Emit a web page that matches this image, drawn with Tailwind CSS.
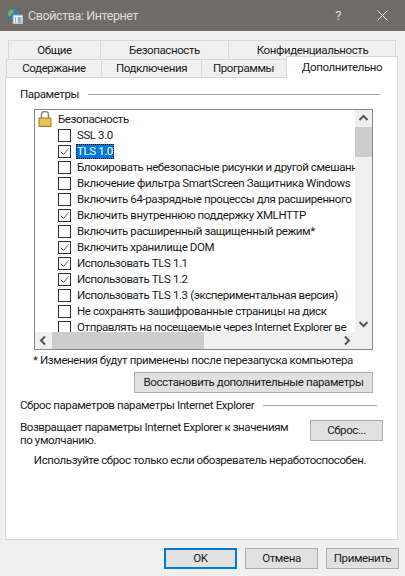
<!DOCTYPE html>
<html lang="ru">
<head>
<meta charset="UTF-8">
<title>Свойства: Интернет</title>
<script src="https://cdn.jsdelivr.net/npm/@tailwindcss/browser@4"></script>
</head>
<body class="w-[405px] h-[576px] overflow-hidden bg-[#f0f0f0] font-['Roboto','Noto_Sans',sans-serif] text-[11.5px] tracking-[-0.4px] leading-[16px] text-[#1a1a1a]">
  <!-- заголовок -->
  <div class="flex items-center h-[31px] bg-[#716b68] text-[#dedcdb]">
    <svg class="ml-[7px] w-[16px] h-[16px]" viewBox="0 0 16 16">
      <circle cx="6.5" cy="6.5" r="6" fill="#2f7fb8"/>
      <path d="M3 2c2-1 4 0 4 2s-3 1-3 3-3 1-3-1 1-3 2-4zM8 8c2-1 4 0 3 2l-3 2z" fill="#6fb35a"/>
      <rect x="6" y="7" width="10" height="9" fill="#f4f4f4" stroke="#9a9a9a"/>
      <path d="M8 10h1M8 12h1M8 14h1M10.500 10h4M10.500 12h4M10.500 14h4" stroke="#3b6ea5"/>
    </svg>
    <span class="ml-[5px] text-[12.5px] mt-[1px]">Свойства: Интернет</span>
    <span class="ml-auto mr-[36px] text-[13px]">?</span>
    <svg class="mr-[17px] w-[11px] h-[11px]" viewBox="0 0 11 11"><path d="M.5.5l10 10M10.500.5l-10 10" stroke="#e8e6e5" fill="none"/></svg>
  </div>

  <!-- вкладки -->
  <div class="relative h-[46px]">
    <div class="absolute left-[8px] top-[9px] w-[388px] h-[19px] flex border border-[#d9d9d9] border-b-0 text-center leading-[19px]">
      <div class="w-[92px] border-r border-[#d9d9d9]">Общие</div>
      <div class="w-[128px] border-r border-[#d9d9d9]">Безопасность</div>
      <div class="flex-1 pl-[1px]">Конфиденциальность</div>
    </div>
    <div class="absolute left-[6px] top-[28px] w-[282px] h-[18px] flex border border-[#d9d9d9] border-b-0 text-center">
      <div class="w-[95px] border-r border-[#d9d9d9]">Содержание</div>
      <div class="w-[100px] border-r border-[#d9d9d9]">Подключения</div>
      <div class="flex-1 pr-[2px]">Программы</div>
    </div>
    <div class="absolute left-[286px] top-[25px] w-[112px] h-[22px] bg-white border border-[#d9d9d9] border-b-0 text-center leading-[20px] z-10">Дополнительно</div>
  </div>

  <!-- панель -->
  <div class="relative ml-[5px] w-[393px] h-[463px] bg-white border border-[#d9d9d9] pl-[14px] pr-[17px]">
    <div class="flex items-center h-[16px] mt-[8px]">
      <span>Параметры</span>
      <div class="ml-[9px] flex-1 h-px bg-[#a0a0a0]"></div>
    </div>

    <!-- список -->
    <div class="ml-[14px] mr-[7px] mt-[7px] h-[241px] border border-[#828790] flex flex-col">
      <div class="flex flex-1 min-h-0">
        <div class="flex-1 min-w-0 overflow-hidden pl-[2px] pt-[1px]">
          <div class="flex items-center h-[16px] whitespace-nowrap">
            <svg class="w-[16px] h-[16px] shrink-0" viewBox="0 0 16 16">
              <path d="M4.500 7V3.500a3.500 3 0 0 1 7 0V7" fill="none" stroke="#8a8a80" stroke-width="1.600"/>
              <rect x="2" y="7" width="12" height="8.500" fill="#e0b23c" stroke="#a9822a"/>
              <path d="M3 9h10M3 11h10M3 13h10" stroke="#f3d77c"/>
            </svg>
            <span class="ml-[5px]">Безопасность</span>
          </div>
          <div class="flex items-center h-[16px] whitespace-nowrap"><span class="ml-[21px] w-[13px] h-[13px] shrink-0 border border-[#333]"></span><span class="ml-[5px] px-px">SSL 3.0</span></div>
          <div class="flex items-center h-[16px] whitespace-nowrap"><span class="ml-[21px] w-[13px] h-[13px] shrink-0 border border-[#333]"><svg viewBox="0 0 11 11" class="w-[11px] h-[11px]"><path d="M1.500 5.500l3 3 5-6" fill="none" stroke="#555"/></svg></span><span class="ml-[5px] px-px h-[15px] leading-[15px] bg-[#0078d7] text-white outline-1 outline-dotted outline-[#000] -outline-offset-1">TLS 1.0</span></div>
          <div class="flex items-center h-[16px] whitespace-nowrap"><span class="ml-[21px] w-[13px] h-[13px] shrink-0 border border-[#333]"></span><span class="ml-[5px] px-px">Блокировать небезопасные рисунки и другой смешанн</span></div>
          <div class="flex items-center h-[16px] whitespace-nowrap"><span class="ml-[21px] w-[13px] h-[13px] shrink-0 border border-[#333]"></span><span class="ml-[5px] px-px">Включение фильтра SmartScreen Защитника Windows</span></div>
          <div class="flex items-center h-[16px] whitespace-nowrap"><span class="ml-[21px] w-[13px] h-[13px] shrink-0 border border-[#333]"></span><span class="ml-[5px] px-px">Включить 64-разрядные процессы для расширенного</span></div>
          <div class="flex items-center h-[16px] whitespace-nowrap"><span class="ml-[21px] w-[13px] h-[13px] shrink-0 border border-[#333]"><svg viewBox="0 0 11 11" class="w-[11px] h-[11px]"><path d="M1.500 5.500l3 3 5-6" fill="none" stroke="#555"/></svg></span><span class="ml-[5px] px-px">Включить внутреннюю поддержку XMLHTTP</span></div>
          <div class="flex items-center h-[16px] whitespace-nowrap"><span class="ml-[21px] w-[13px] h-[13px] shrink-0 border border-[#333]"></span><span class="ml-[5px] px-px">Включить расширенный защищенный режим*</span></div>
          <div class="flex items-center h-[16px] whitespace-nowrap"><span class="ml-[21px] w-[13px] h-[13px] shrink-0 border border-[#333]"><svg viewBox="0 0 11 11" class="w-[11px] h-[11px]"><path d="M1.500 5.500l3 3 5-6" fill="none" stroke="#555"/></svg></span><span class="ml-[5px] px-px">Включить хранилище DOM</span></div>
          <div class="flex items-center h-[16px] whitespace-nowrap"><span class="ml-[21px] w-[13px] h-[13px] shrink-0 border border-[#333]"><svg viewBox="0 0 11 11" class="w-[11px] h-[11px]"><path d="M1.500 5.500l3 3 5-6" fill="none" stroke="#555"/></svg></span><span class="ml-[5px] px-px">Использовать TLS 1.1</span></div>
          <div class="flex items-center h-[16px] whitespace-nowrap"><span class="ml-[21px] w-[13px] h-[13px] shrink-0 border border-[#333]"><svg viewBox="0 0 11 11" class="w-[11px] h-[11px]"><path d="M1.500 5.500l3 3 5-6" fill="none" stroke="#555"/></svg></span><span class="ml-[5px] px-px">Использовать TLS 1.2</span></div>
          <div class="flex items-center h-[16px] whitespace-nowrap"><span class="ml-[21px] w-[13px] h-[13px] shrink-0 border border-[#333]"></span><span class="ml-[5px] px-px">Использовать TLS 1.3 (экспериментальная версия)</span></div>
          <div class="flex items-center h-[16px] whitespace-nowrap"><span class="ml-[21px] w-[13px] h-[13px] shrink-0 border border-[#333]"></span><span class="ml-[5px] px-px">Не сохранять зашифрованные страницы на диск</span></div>
          <div class="flex items-center h-[16px] whitespace-nowrap"><span class="ml-[21px] w-[13px] h-[13px] shrink-0 border border-[#333]"></span><span class="ml-[5px] px-px">Отправлять на посещаемые через Internet Explorer ве</span></div>
        </div>
        <!-- вертикальная прокрутка -->
        <div class="w-[17px] shrink-0 bg-[#f0f0f0] flex flex-col">
          <svg class="w-[17px] h-[17px] shrink-0" viewBox="0 0 17 17"><path d="M4.500 10l4-4 4 4" fill="none" stroke="#555" stroke-width="2"/></svg>
          <div class="h-[30px] bg-[#cdcdcd]"></div>
          <svg class="w-[17px] h-[17px] shrink-0 mt-auto" viewBox="0 0 17 17"><path d="M4.500 7l4 4 4-4" fill="none" stroke="#555" stroke-width="2"/></svg>
        </div>
      </div>
      <!-- горизонтальная прокрутка -->
      <div class="h-[17px] shrink-0 bg-[#f0f0f0] flex items-stretch">
        <svg class="w-[17px] h-[17px] shrink-0" viewBox="0 0 17 17"><path d="M10 4.500l-4 4 4 4" fill="none" stroke="#555" stroke-width="2"/></svg>
        <div class="w-[152px] bg-[#cdcdcd]"></div>
        <svg class="ml-auto mr-[17px] w-[17px] h-[17px] shrink-0" viewBox="0 0 17 17"><path d="M7 4.500l4 4-4 4" fill="none" stroke="#555" stroke-width="2"/></svg>
      </div>
    </div>

    <div class="mt-[2px] ml-[13px] h-[16px] whitespace-nowrap">* Изменения будут применены после перезапуска компьютера</div>
    <div class="mt-[4px] flex justify-end pr-[7px]">
      <div class="w-[239px] h-[21px] bg-[#e1e1e1] border border-[#adadad] text-center leading-[19px]">Восстановить дополнительные параметры</div>
    </div>

    <div class="flex items-center h-[16px] mt-[4px] mr-[3px]">
      <span>Сброс параметров параметры Internet Explorer</span>
      <div class="ml-[9px] flex-1 h-px bg-[#a0a0a0]"></div>
    </div>
    <div class="mt-[7px] flex items-start justify-between mr-[-3px]">
      <div class="w-[275px] leading-[13px] mt-[1px]">Возвращает параметры Internet Explorer к значениям по умолчанию.</div>
      <div class="w-[73px] h-[21px] bg-[#e1e1e1] border border-[#adadad] text-center leading-[19px]">Сброс...</div>
    </div>
    <div class="mt-[5px] text-center whitespace-nowrap">Используйте сброс только если обозреватель неработоспособен.</div>
  </div>

  <!-- кнопки -->
  <div class="flex justify-end gap-[8px] pr-[6px] mt-[8px]">
    <div class="w-[73px] h-[21px] bg-[#e1e1e1] border-2 border-[#0078d7] text-center leading-[17px]">OK</div>
    <div class="w-[73px] h-[21px] bg-[#e1e1e1] border border-[#adadad] text-center leading-[19px]">Отмена</div>
    <div class="w-[73px] h-[21px] bg-[#e1e1e1] border border-[#adadad] text-center leading-[19px]">Применить</div>
  </div>
</body>
</html>
